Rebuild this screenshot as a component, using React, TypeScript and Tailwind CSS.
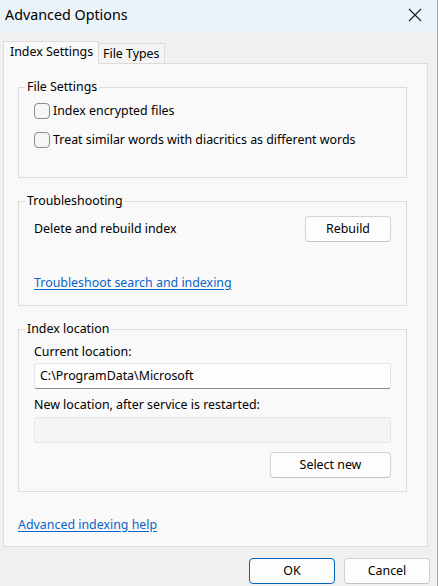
import React from "react";

const font = "font-['Segoe_UI','Noto_Sans',sans-serif]";

function Checkbox({ label }: { label: string }) {
  return (
    <div className="flex items-center h-[16px]">
      <div className="w-[16px] h-[16px] rounded-[4px] border border-[#8b8b8b] bg-[#f6f6f6] box-border shrink-0" />
      <span className="ml-[3px] leading-[16px]">{label}</span>
    </div>
  );
}

function Button({ children, w, primary }: { children: React.ReactNode; w: string; primary?: boolean }) {
  return (
    <button
      className={
        "h-[26px] rounded-[4px] bg-[#fdfdfd] text-[12.4px] text-black leading-[16px] border " +
        (primary ? "border-[#0067c0] " : "border-[#d3d3d3] border-b-[#c4c4c4] ") +
        w
      }
    >
      {children}
    </button>
  );
}

function Group({ title, children, className }: { title: string; children: React.ReactNode; className?: string }) {
  return (
    <fieldset className={"border border-[#dcdcdc] w-[389px] px-0 " + (className ?? "")}>
      <legend className="ml-[6px] px-[2px] leading-[16px]">{title}</legend>
      <div className="px-[15px]">{children}</div>
    </fieldset>
  );
}

export default function App() {
  return (
    <div className={"w-[438px] h-[586px] bg-[#f0f0f0] border-r border-[#a6a6a6] flex flex-col text-[12.4px] text-black " + font}>
      <div className="h-[32px] bg-[#eaf4f8] flex items-center justify-between pl-[5px] pr-[15px] pb-[3px] shrink-0">
        <span className="text-[14.3px] leading-[20px]">Advanced Options</span>
        <svg width="14" height="14" viewBox="0 0 14 14" className="mt-[1px]">
          <path d="M1 1 L13 13 M13 1 L1 13" stroke="#1a1a1a" strokeWidth="1.1" fill="none" />
        </svg>
      </div>

      <div className="pt-[9px] pl-[3px] flex items-end">
        <div className="relative z-10 -mb-px h-[23px] w-[96px] bg-[#f9f9f9] border border-b-0 border-[#dcdcdc] pl-[6px] pt-[2px] leading-[16px] whitespace-nowrap">
          Index Settings
        </div>
        <div className="h-[20px] w-[67px] -ml-px bg-[#f4f4f4] border border-b-0 border-[#dcdcdc] pl-[4px] pt-[2px] leading-[16px] whitespace-nowrap">
          File Types
        </div>
      </div>

      <div className="ml-[3px] w-[425px] h-[484px] bg-[#f9f9f9] border border-[#dcdcdc] pl-[14px] pr-[19px] pt-[15px] flex flex-col shrink-0">
        <Group title="File Settings">
          <div className="pt-[8px] pb-[29px] flex flex-col gap-[13px]">
            <Checkbox label="Index encrypted files" />
            <Checkbox label="Treat similar words with diacritics as different words" />
          </div>
        </Group>

        <Group title="Troubleshooting" className="mt-[15px]">
          <div className="pt-[7px] pb-[14px]">
            <div className="flex items-center justify-between">
              <span className="leading-[16px]">Delete and rebuild index</span>
              <Button w="w-[86px]">Rebuild</Button>
            </div>
            <a className="block mt-[33px] leading-[16px] text-[#0a64c8] underline underline-offset-[2px] w-fit cursor-pointer">
              Troubleshoot search and indexing
            </a>
          </div>
        </Group>

        <Group title="Index location" className="mt-[15px]">
          <div className="pt-[7px] pb-[13px] flex flex-col">
            <span className="leading-[16px]">Current location:</span>
            <div className="mt-[3px] h-[26px] bg-[#fdfdfd] border border-[#e5e5e5] border-b-[#8a8a8a] rounded-[3px] flex items-center pl-[5px]">
              C:\ProgramData\Microsoft
            </div>
            <span className="mt-[8px] leading-[16px]">New location, after service is restarted:</span>
            <div className="mt-[4px] h-[26px] bg-[#f5f5f5] border border-[#e6e6e6] rounded-[3px]" />
            <div className="mt-[9px] flex justify-end">
              <Button w="w-[121px]">Select new</Button>
            </div>
          </div>
        </Group>

        <a className="block mt-[25px] leading-[16px] text-[#0a64c8] underline underline-offset-[2px] w-fit cursor-pointer">
          Advanced indexing help
        </a>
      </div>

      <div className="mt-[11px] flex justify-end gap-[9px] pr-[7px]">
        <Button w="w-[86px]" primary>
          OK
        </Button>
        <Button w="w-[86px]">Cancel</Button>
      </div>
    </div>
  );
}
